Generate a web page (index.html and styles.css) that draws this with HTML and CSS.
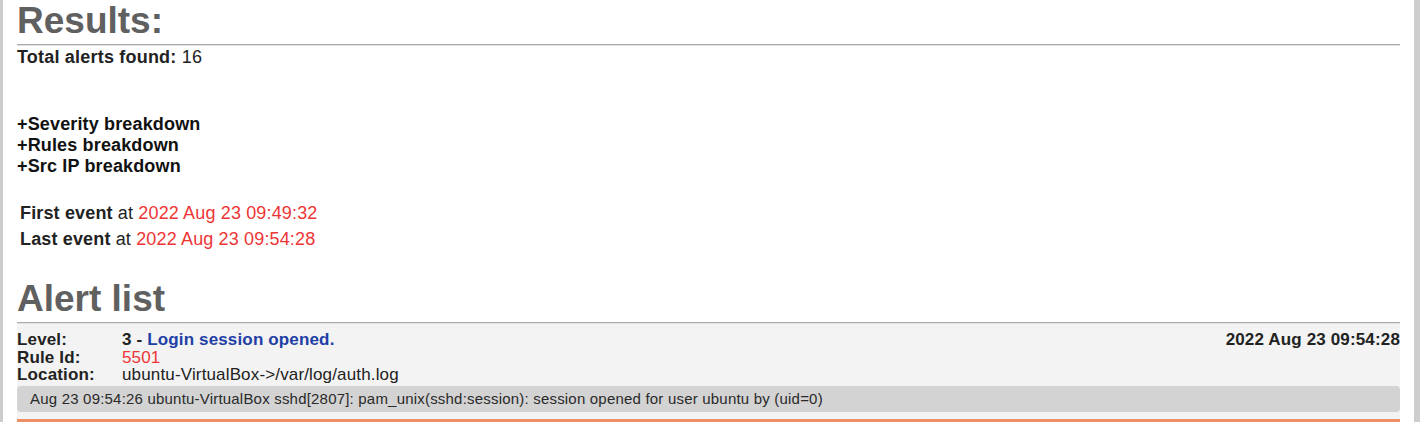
FILE: index.html
```html
<!DOCTYPE html>
<html>
<head>
<meta charset="utf-8">
<link rel="stylesheet" href="styles.css">
</head>
<body>
<div class="page">
  <div class="side-left"></div>
  <main class="content">
    <h2 class="heading">Results:</h2>
    <p class="total"><b>Total alerts found:</b> 16</p>

    <div class="breakdowns">
      <div class="toggle">+Severity breakdown</div>
      <div class="toggle">+Rules breakdown</div>
      <div class="toggle">+Src IP breakdown</div>
    </div>

    <div class="events">
      <div class="event"><b>First event</b> at <span class="red">2022 Aug 23 09:49:32</span></div>
      <div class="event"><b>Last event</b> at <span class="red">2022 Aug 23 09:54:28</span></div>
    </div>

    <h2 class="heading heading-alerts">Alert list</h2>

    <div class="alert">
      <div class="alert-head">
        <div class="alert-fields">
          <div class="row"><span class="label">Level:</span><span class="value"><b>3 - </b><b class="blue">Login session opened.</b></span></div>
          <div class="row"><span class="label">Rule Id:</span><span class="value red">5501</span></div>
          <div class="row"><span class="label">Location:</span><span class="value">ubuntu-VirtualBox-&gt;/var/log/auth.log</span></div>
        </div>
        <div class="alert-date">2022 Aug 23 09:54:28</div>
      </div>
      <div class="log">Aug 23 09:54:26 ubuntu-VirtualBox sshd[2807]: pam_unix(sshd:session): session opened for user ubuntu by (uid=0)</div>
    </div>
  </main>
  <div class="side-right"></div>
</div>
</body>
</html>
```

FILE: styles.css
```css
html, body {
  margin: 0;
  padding: 0;
  background: #ffffff;
}

body {
  font-family: "Liberation Sans", Arial, sans-serif;
  color: #222222;
  letter-spacing: 0.15px;
  overflow: hidden;
}

.page {
  display: flex;
  height: 422px;
}

.side-left {
  width: 3px;
  background: #cccccc;
  flex: none;
}

.side-right {
  width: 6px;
  background: #cdcdcd;
  flex: none;
}

.content {
  flex: 1;
  padding: 0 14px;
  min-width: 0;
}

.heading {
  margin: 0;
  font-size: 37px;
  line-height: 42px;
  font-weight: bold;
  letter-spacing: 0;
  color: #606060;
  padding-bottom: 2px;
  border-bottom: 1px solid #aaaaaa;
  box-shadow: 0 1px 0 #e2e2e2;
}

.total {
  margin: 2px 0 0;
  font-size: 18px;
  line-height: 20px;
  letter-spacing: 0.2px;
}

.breakdowns {
  margin-top: 47px;
}

.toggle {
  font-size: 18px;
  line-height: 21px;
  font-weight: bold;
  color: #111111;
}

.events {
  margin-top: 23px;
  padding-left: 3px;
}

.event {
  font-size: 18px;
  line-height: 26px;
}

.red {
  color: #ee3535;
}

.blue {
  color: #1e40a6;
}

.heading-alerts {
  margin-top: 26px;
}

.alert {
  margin-top: 1px;
  background: #f3f3f3;
  padding: 7px 0 7px;
  border-bottom: 3px solid #ef8f66;
}

.alert-head {
  display: flex;
  justify-content: space-between;
  align-items: flex-start;
  font-size: 17px;
  line-height: 17.5px;
}

.row {
  display: flex;
}

.label {
  width: 105px;
  font-weight: bold;
  flex: none;
}

.alert-date {
  font-weight: bold;
}

.log {
  margin-top: 2px;
  background: #d3d3d3;
  border-radius: 4px;
  font-size: 15px;
  line-height: 26px;
  letter-spacing: 0.2px;
  padding-left: 13px;
  color: #2a2a2a;
}
```
